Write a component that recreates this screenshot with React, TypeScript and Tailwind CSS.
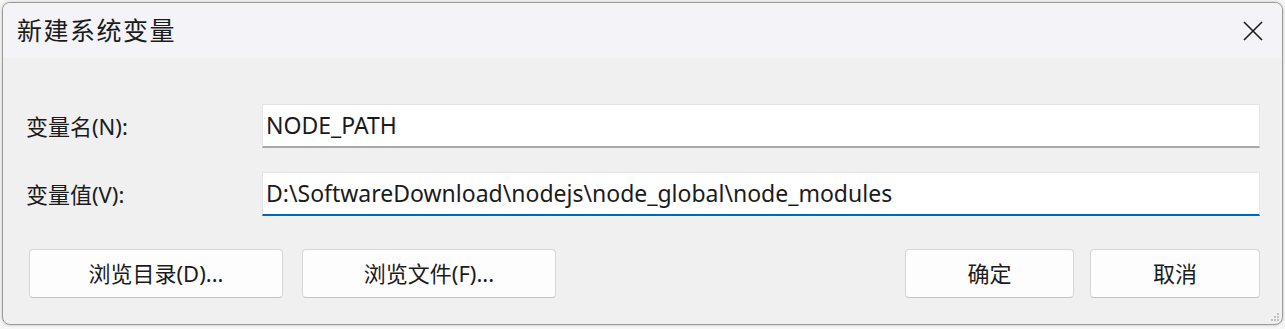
const FONT = "font-['Noto_Sans','Noto_Sans_CJK_SC',sans-serif]";

function Field({ label, value, focused }: { label: string; value: string; focused?: boolean }) {
  return (
    <div className="flex items-center">
      <div className="w-[259px] shrink-0 pl-[23px] text-[22px] text-[#1b1b1b]">{label}</div>
      <div
        className={
          "flex-1 h-[44px] bg-white flex items-center pl-[3px] text-[23px] text-[#1b1b1b] border border-[#e5e5e5] " +
          (focused ? "border-b-2 border-b-[#0067c0]" : "border-b-2 border-b-[#a8a8a8]")
        }
      >
        {value}
      </div>
    </div>
  );
}

function Btn({ children, w }: { children: string; w: string }) {
  return (
    <div
      className={
        "h-[49px] rounded-[4px] bg-[#fdfdfd] border border-[#d6d6d6] border-b-[#c4c4c4] flex items-center justify-center text-[22px] text-[#1b1b1b] " +
        w
      }
    >
      {children}
    </div>
  );
}

export default function App() {
  return (
    <div className={"w-[1285px] h-[329px] bg-[#f7f7f7] pt-[2px] pl-[2px] " + FONT}>
      <div className="w-[1281px] h-[323px] rounded-[8px] border border-[#9b9b9b] overflow-hidden bg-[#f0f0f0] flex flex-col shadow-[0_0_3px_rgba(0,0,0,0.25)]">
        <div className="h-[55px] shrink-0 bg-[#f3f3f8] flex items-center justify-between pl-[14px] pr-[19px]">
          <span className="text-[25px] text-[#1b1b1b] tracking-[1.5px]">新建系统变量</span>
          <svg width="20" height="20" viewBox="0 0 20 20">
            <path d="M1 1L19 19M19 1L1 19" stroke="#1b1b1b" strokeWidth="1.6" fill="none" />
          </svg>
        </div>
        <div className="flex-1 flex flex-col pr-[22px] pt-[46px] relative">
          <div className="flex flex-col gap-[24px]">
            <Field label="变量名(N):" value="NODE_PATH" />
            <Field label="变量值(V):" value="D:\SoftwareDownload\nodejs\node_global\node_modules" focused />
          </div>
          <div className="flex items-center mt-[33px] pl-[26px]">
            <Btn w="w-[254px]">浏览目录(D)...</Btn>
            <div className="w-[19px]" />
            <Btn w="w-[254px]">浏览文件(F)...</Btn>
            <div className="flex-1" />
            <Btn w="w-[169px]">确定</Btn>
            <div className="w-[16px]" />
            <Btn w="w-[170px]">取消</Btn>
          </div>
          <svg width="10" height="10" viewBox="0 0 10 10" className="absolute right-[2px] bottom-[2px]">
            <rect x="7" y="1" width="2" height="2" fill="#c2c2c2" />
            <rect x="4" y="4" width="2" height="2" fill="#c2c2c2" />
            <rect x="7" y="4" width="2" height="2" fill="#c2c2c2" />
            <rect x="1" y="7" width="2" height="2" fill="#c2c2c2" />
            <rect x="4" y="7" width="2" height="2" fill="#c2c2c2" />
            <rect x="7" y="7" width="2" height="2" fill="#c2c2c2" />
          </svg>
        </div>
      </div>
    </div>
  );
}
